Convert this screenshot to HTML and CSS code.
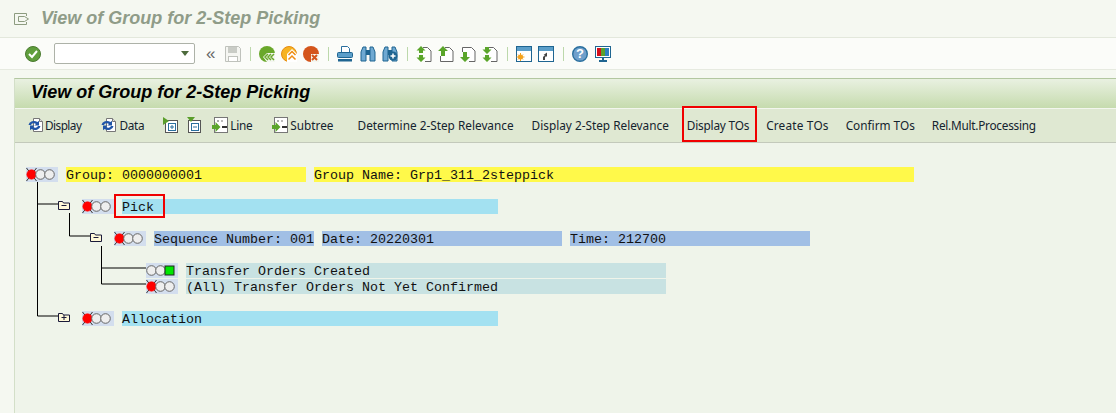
FILE: index.html
```html
<!DOCTYPE html>
<html lang="en">
<head>
    <meta charset="UTF-8">
    <title>View of Group for 2-Step Picking</title>
    <link rel="stylesheet" href="styles.css">
</head>
<body>
    <svg class="defs" width="0" height="0">
        <defs>
            <symbol id="lights-red" viewBox="0 0 32 15">
                <path d="M.5 1l10 13M10.500 1L.5 14" stroke="#333" stroke-width="1"/>
                <circle cx="5.500" cy="7.500" r="4.700" fill="#ff0000" stroke="#ff0000" stroke-width=".6"/>
                <circle cx="14.500" cy="7.500" r="4.800" fill="#eee" stroke="#666"/>
                <circle cx="23.500" cy="7.500" r="4.800" fill="#eee" stroke="#666"/>
            </symbol>
            <symbol id="lights-green" viewBox="0 0 32 15">
                <circle cx="5.500" cy="7.500" r="4.800" fill="#eee" stroke="#666"/>
                <circle cx="14.500" cy="7.500" r="4.800" fill="#eee" stroke="#666"/>
                <rect x="19" y="3" width="9" height="9" fill="#00e600" stroke="#222"/>
            </symbol>
            <symbol id="folder-open" viewBox="0 0 12 10">
                <path d="M.5 9.500v-8h4l1 1.500h6v6.500z" fill="#fff8d8" stroke="#1a1a3a"/>
                <path d="M3.500 5.500h5" stroke="#1a1a3a"/>
            </symbol>
            <symbol id="folder-closed" viewBox="0 0 12 10">
                <path d="M.5 9.500v-8h4l1 1.500h6v6.500z" fill="#fff8d8" stroke="#1a1a3a"/>
                <path d="M3.500 5.500h5M6 3v5" stroke="#1a1a3a"/>
            </symbol>
            <symbol id="refresh" viewBox="0 0 16 16">
                <path d="M5.500 1.500h6l3 3v10h-9z" fill="#fff" stroke="#777"/>
                <path d="M11.500 1.500v3h3" fill="#ddd" stroke="#777"/>
                <path d="M.5 8a5.500 4.500 0 0 1 9-3l1.500-1.200v4.700H6.500l1.500-1.500a3 2.500 0 0 0-5 1z" fill="#1f55a8"/>
                <path d="M12.500 9a5.500 4.500 0 0 1-9 3L2 13.200V8.500h4.500L5 10a3 2.500 0 0 0 5-1z" fill="#1f55a8"/>
            </symbol>
            <symbol id="expand" viewBox="0 0 16 16">
                <rect x="2.500" y="3.500" width="12" height="12" fill="#fff" stroke="#555"/>
                <path d="M0 0l6 4-6 4z" fill="#5a9e2a"/>
                <rect x="5.500" y="6.500" width="7" height="7" fill="none" stroke="#2a6f9e"/>
                <path d="M7 10h4M9 8v4" stroke="#2a6f9e"/>
            </symbol>
            <symbol id="collapse" viewBox="0 0 16 16">
                <rect x="2.500" y="3.500" width="12" height="12" fill="#fff" stroke="#555"/>
                <path d="M1 0h8l-4 5z" fill="#5a9e2a"/>
                <rect x="5.500" y="6.500" width="7" height="7" fill="none" stroke="#2a6f9e"/>
                <path d="M7 10h4" stroke="#2a6f9e"/>
            </symbol>
            <symbol id="insert" viewBox="0 0 16 16">
                <rect x="2.500" y=".5" width="13" height="15" fill="#fff" stroke="#777"/>
                <path d="M5 3h2v2H5z" fill="#aaa"/>
                <path d="M9 3h2v2H9z" fill="#bbb"/>
                <path d="M10 9h5v2h-5z" fill="#333"/>
                <path d="M0 8h3.500V5l5 5-5 5v-3H0z" fill="#5aa52a"/>
            </symbol>
            <symbol id="check" viewBox="0 0 16 16">
                <circle cx="8" cy="8" r="7.500" fill="#5f9e3c" stroke="#4a7a30"/>
                <path d="M4 8l3 3 5-6" fill="none" stroke="#fff" stroke-width="2"/>
            </symbol>
            <symbol id="save" viewBox="0 0 16 16">
                <path d="M.5.5h13l2 2v13H.5z" fill="#f5f6f2" stroke="#bfc2bc"/>
                <rect x="3" y="1" width="9" height="6" fill="#c9ccc6"/>
                <rect x="3.500" y="10.500" width="9" height="5" fill="#fff" stroke="#bfc2bc"/>
            </symbol>
            <symbol id="back" viewBox="0 0 16 16">
                <circle cx="8" cy="8" r="8" fill="#6aa82b"/>
                <path d="M16 7H8l-4 4 4 5h8z" fill="#f4f7f0"/>
                <path d="M9 8l-3 3 3 3M12 8l-3 3 3 3M15 8l-3 3 3 3" fill="none" stroke="#6aa82b" stroke-width="1.500"/>
            </symbol>
            <symbol id="exit" viewBox="0 0 16 16">
                <circle cx="8" cy="8" r="7.500" fill="#f6b321" stroke="#e58a10"/>
                <path d="M11 3l-5 5v8h10V8z" fill="#fff"/>
                <path d="M7.500 9l3.500-3.500L14.500 9M7.500 13.500l3.500-3.500 3.500 3.500" fill="none" stroke="#ef8c12" stroke-width="1.500"/>
            </symbol>
            <symbol id="cancel" viewBox="0 0 16 16">
                <circle cx="8" cy="8" r="8" fill="#d4551c"/>
                <rect x="8" y="8" width="9" height="9" fill="#f4f7f0"/>
                <path d="M9 9l5 5M14 9l-5 5" stroke="#d4551c" stroke-width="2"/>
            </symbol>
            <symbol id="print" viewBox="0 0 16 16">
                <path d="M4.500.5h6l2 2v4h-8z" fill="#fff" stroke="#2a6f9e"/>
                <rect x=".5" y="6.500" width="15" height="5" rx="1" fill="#5b9ec9" stroke="#1f6591"/>
                <rect x="1" y="13" width="14" height="2.500" fill="#1f6591"/>
            </symbol>
            <symbol id="find" viewBox="0 0 16 16">
                <path d="M1 6l2-5h3v14H1zM15 6l-2-5h-3v14h5z" fill="#6fa9d2" stroke="#1f6591"/>
                <rect x="6" y="4" width="4" height="5" fill="#1f6591"/>
            </symbol>
            <symbol id="find-next" viewBox="0 0 16 16">
                <path d="M1 6l2-5h3v14H1zM15 6l-2-5h-3v14h5z" fill="#6fa9d2" stroke="#1f6591"/>
                <rect x="6" y="4" width="4" height="5" fill="#1f6591"/>
                <circle cx="11" cy="10" r="4.500" fill="#1f6591"/>
                <path d="M8.500 10h5M11 7.500v5" stroke="#fff" stroke-width="1.500"/>
            </symbol>
            <symbol id="page-first" viewBox="0 0 16 16">
                <path d="M7 1.500h4.500L15 5v10.500H9" fill="#fff" stroke="#666"/>
                <path d="M5 0l4.500 4.500H7V7H3V4.500H.5zM5 16l4.500-4.500H7V9H3v2.500H.5z" fill="#5aa52a"/>
            </symbol>
            <symbol id="page-prev" viewBox="0 0 16 16">
                <path d="M7 1.500h4.500L15 5v10.500H2.500V10" fill="#fff" stroke="#666"/>
                <path d="M5 0l5 5H7v5H3V5H0z" fill="#5aa52a"/>
            </symbol>
            <symbol id="page-next" viewBox="0 0 16 16">
                <path d="M2.500 6V1.500h9L15 5v10.500H9" fill="#fff" stroke="#666"/>
                <path d="M5 16L0 11h3V6h4v5h3z" fill="#5aa52a"/>
            </symbol>
            <symbol id="page-last" viewBox="0 0 16 16">
                <path d="M7 1.500h4.500L15 5v10.500H9" fill="#fff" stroke="#666"/>
                <path d="M5 8L.5 3.500H3V1h4v2.500h2.500zM5 16L.5 11.500H3V9h4v2.500h2.500z" fill="#5aa52a"/>
            </symbol>
            <symbol id="window-new" viewBox="0 0 16 16">
                <rect x=".5" y=".5" width="15" height="15" fill="#fff" stroke="#1f6591"/>
                <rect x="1" y="1" width="14" height="4" fill="#5b9ec9"/>
                <circle cx="4.500" cy="11" r="2.500" fill="#f5a21c"/>
                <path d="M4.500 7v8M.5 11h8M2 8.500l5 5M7 8.500l-5 5" stroke="#f5a21c"/>
            </symbol>
            <symbol id="window-link" viewBox="0 0 16 16">
                <rect x=".5" y=".5" width="15" height="15" fill="#fff" stroke="#1f6591"/>
                <rect x="1" y="1" width="14" height="4" fill="#5b9ec9"/>
                <path d="M5 14v-3l2-2H5.500L9 6.500V11L8 10l-1 1.500V14z" fill="#444"/>
            </symbol>
            <symbol id="help" viewBox="0 0 16 16">
                <circle cx="8" cy="8" r="7.300" fill="#6f9fcb" stroke="#2a6f9e" stroke-width="1.400"/>
            </symbol>
            <symbol id="layout" viewBox="0 0 16 16">
                <rect x=".5" y=".5" width="15" height="11" fill="#fff" stroke="#1f6591"/>
                <rect x="2" y="2" width="4" height="8" fill="#d40f1c"/>
                <rect x="6" y="2" width="4" height="8" fill="#5aa02c"/>
                <rect x="10" y="2" width="4" height="8" fill="#2d7fc1"/>
                <path d="M7 12h2v2h3v2H4v-2h3z" fill="#1f6591"/>
            </symbol>
        </defs>
    </svg>

    <div class="title-bar">
        <svg class="title-icon" width="16" height="12" viewBox="0 0 16 12"><path d="M12.500 3V.5H.5v11h12V9" fill="none" stroke="#8d9c80"/><path d="M4.500 3.500h6l4 2.500-4 2.500h-6z" fill="none" stroke="#8d9c80"/></svg>
        <span class="page-title">View of Group for 2-Step Picking</span>
    </div>

    <div class="sys-toolbar">
        <svg class="icon"><use href="#check"/></svg>
        <div class="cmd-field"><span class="cmd-arrow"></span></div>
        <span class="chevrons">«</span>
        <svg class="icon"><use href="#save"/></svg>
        <span class="sep"></span>
        <div class="group">
            <svg class="icon"><use href="#back"/></svg>
            <svg class="icon"><use href="#exit"/></svg>
            <svg class="icon"><use href="#cancel"/></svg>
        </div>
        <span class="sep"></span>
        <div class="group">
            <svg class="icon"><use href="#print"/></svg>
            <svg class="icon find-icon"><use href="#find"/></svg>
            <svg class="icon"><use href="#find-next"/></svg>
        </div>
        <span class="sep"></span>
        <div class="group">
            <svg class="icon"><use href="#page-first"/></svg>
            <svg class="icon"><use href="#page-prev"/></svg>
            <svg class="icon"><use href="#page-next"/></svg>
            <svg class="icon"><use href="#page-last"/></svg>
        </div>
        <span class="sep"></span>
        <div class="group">
            <svg class="icon"><use href="#window-new"/></svg>
            <svg class="icon"><use href="#window-link"/></svg>
        </div>
        <span class="sep"></span>
        <div class="group">
            <span class="help-wrap"><svg class="icon"><use href="#help"/></svg><span class="help-mark">?</span></span>
            <svg class="icon find-icon"><use href="#layout"/></svg>
        </div>
    </div>

    <div class="panel">
        <div class="panel-title">View of Group for 2-Step Picking</div>

        <div class="app-toolbar">
            <span class="btn btn-display"><svg class="icon"><use href="#refresh"/></svg>Display</span>
            <span class="btn btn-data"><svg class="icon"><use href="#refresh"/></svg>Data</span>
            <svg class="icon icon-expand"><use href="#expand"/></svg>
            <svg class="icon icon-collapse"><use href="#collapse"/></svg>
            <span class="btn btn-line"><svg class="icon"><use href="#insert"/></svg>Line</span>
            <span class="btn btn-subtree"><svg class="icon"><use href="#insert"/></svg>Subtree</span>
            <span class="btn btn-text">Determine 2-Step Relevance</span>
            <span class="btn btn-text">Display 2-Step Relevance</span>
            <span class="btn btn-text marked">Display TOs</span>
            <span class="btn btn-text btn-create">Create TOs</span>
            <span class="btn btn-text">Confirm TOs</span>
            <span class="btn btn-text btn-rel">Rel.Mult.Processing</span>
        </div>

        <div class="tree">
            <svg class="connectors" width="200" height="200" viewBox="0 0 200 200">
                <path d="M22.500 39v134M22.500 61H43M54.500 70v23H75M86.500 103v38M86.500 125H131M86.500 141H131M22.500 173H43" fill="none" stroke="#000"/>
            </svg>

            <div class="row row-0">
                <svg class="lights"><use href="#lights-red"/></svg>
                <span class="cell yellow w30">Group: 0000000001</span>
                <span class="cell yellow w75">Group Name: Grp1_311_2steppick</span>
            </div>
            <div class="row row-1 spaced">
                <svg class="folder"><use href="#folder-open"/></svg>
                <svg class="lights"><use href="#lights-red"/></svg>
                <span class="cell cyan w47"><span class="marked-word">Pick</span></span>
            </div>
            <div class="row row-2 spaced">
                <svg class="folder"><use href="#folder-open"/></svg>
                <svg class="lights"><use href="#lights-red"/></svg>
                <span class="cell blue w20">Sequence Number: 001</span>
                <span class="cell blue w30">Date: 20220301</span>
                <span class="cell blue w30">Time: 212700</span>
            </div>
            <div class="row row-3 spaced">
                <svg class="lights"><use href="#lights-green"/></svg>
                <span class="cell teal w60">Transfer Orders Created</span>
            </div>
            <div class="row row-3">
                <svg class="lights"><use href="#lights-red"/></svg>
                <span class="cell teal w60">(All) Transfer Orders Not Yet Confirmed</span>
            </div>
            <div class="row row-1 spaced">
                <svg class="folder"><use href="#folder-closed"/></svg>
                <svg class="lights"><use href="#lights-red"/></svg>
                <span class="cell cyan w47">Allocation</span>
            </div>
        </div>
    </div>
</body>
</html>
```

FILE: styles.css
```css
html, body {
    height: 100%;
}
body {
    margin: 0;
    display: flex;
    flex-direction: column;
    overflow: hidden;
    background-color: #f5f8f1;
    font-family: "Liberation Sans", Arial, sans-serif;
}
.defs {
    position: absolute;
}
.icon {
    display: block;
    width: 16px;
    height: 16px;
    flex: none;
}

/* title */
.title-bar {
    height: 38px;
    padding-left: 14px;
    display: flex;
    align-items: center;
    border-bottom: 1px solid #e3e8dc;
    box-sizing: border-box;
}
.title-icon {
    margin-right: 11px;
}
.page-title {
    font-size: 18px;
    font-weight: bold;
    font-style: italic;
    color: #8f9c88;
}

/* system toolbar */
.sys-toolbar {
    height: 31px;
    padding-left: 25px;
    display: flex;
    align-items: center;
    border-bottom: 1px solid #e6eae0;
    background-color: #fbfcf9;
}
.cmd-field {
    width: 139px;
    height: 19px;
    margin-left: 13px;
    border: 1px solid #adb2a8;
    border-radius: 2px;
    background-color: #fff;
    position: relative;
}
.cmd-arrow {
    position: absolute;
    right: 5px;
    top: 7px;
    border-left: 4px solid transparent;
    border-right: 4px solid transparent;
    border-top: 5px solid #4d6b3c;
}
.chevrons {
    width: 30px;
    padding-left: 11px;
    box-sizing: border-box;
    font-size: 17px;
    line-height: 16px;
    color: #666;
}
.sep {
    width: 1px;
    height: 14px;
    margin: 0 8px 0 9px;
    background-color: #bcd8ab;
}
.group {
    display: flex;
    gap: 6px;
}
.find-icon {
    margin-left: 1px;
}
.help-wrap {
    position: relative;
    display: block;
}
.help-mark {
    position: absolute;
    left: 0;
    right: 0;
    top: 0;
    text-align: center;
    font-size: 13px;
    line-height: 16px;
    font-weight: bold;
    color: #fff;
}

/* panel */
.panel {
    flex: 1;
    margin: 8px 0 0 14px;
    border-top: 1px solid #b3c7a1;
    border-left: 1px solid #d3dfc8;
    display: flex;
    flex-direction: column;
    background-color: #eff4ea;
}
.panel-title {
    height: 29px;
    padding-left: 16px;
    line-height: 27px;
    font-size: 18px;
    font-weight: bold;
    font-style: italic;
    color: #000;
    background: linear-gradient(#e9f1e1, #c6dbae);
    border-bottom: 1px solid #f3f6ee;
}
.app-toolbar {
    height: 31px;
    padding: 0 0 2px 13px;
    display: flex;
    align-items: center;
    font-family: "Noto Sans", sans-serif;
    font-size: 11.8px;
    color: #14232e;
    background-color: #dfe8d2;
    border-bottom: 1px solid #c3c9bb;
}
.btn {
    display: flex;
    align-items: center;
    flex: none;
}
.btn-display {
    letter-spacing: -0.55px;
}
.btn-display .icon {
    margin-right: 1px;
}
.btn-data {
    margin-left: 20px;
    letter-spacing: -0.3px;
}
.btn-data .icon,
.btn-line .icon,
.btn-subtree .icon {
    margin-right: 2px;
}
.icon-expand {
    margin-left: 19px;
}
.icon-collapse {
    margin-left: 7px;
}
.btn-line {
    margin-left: 10px;
    letter-spacing: -0.3px;
}
.btn-subtree {
    margin-left: 20px;
}
.btn-text {
    margin-left: 18px;
}
.btn-subtree + .btn-text {
    margin-left: 24px;
}
.marked ~ .btn-text {
    margin-left: 17px;
}
.btn-text.marked {
    letter-spacing: -0.2px;
}
.btn-create {
    letter-spacing: 0.2px;
}
.btn-rel {
    letter-spacing: -0.25px;
}
.marked,
.marked-word {
    position: relative;
}
.marked::after {
    content: "";
    position: absolute;
    left: -5px;
    right: -8px;
    top: -11px;
    bottom: -9px;
    border: 2px solid #f00000;
}
.marked-word {
    display: inline-block;
    height: 15px;
}
.marked-word::after {
    content: "";
    position: absolute;
    left: -8px;
    right: -11px;
    top: -5px;
    bottom: -4px;
    border: 2px solid #f00000;
}

/* tree list, 8px character grid */
.tree {
    flex: 1;
    position: relative;
    padding-top: 24px;
    font-family: "Liberation Mono", "Courier New", monospace;
    font-size: 13.33px;
    color: #111;
}
.connectors {
    position: absolute;
    left: 0;
    top: 0;
}
.row {
    display: flex;
    height: 16px;
}
.row.spaced {
    margin-top: 16px;
}
.row-0 { padding-left: 11px; }
.row-1 { padding-left: 43px; }
.row-2 { padding-left: 75px; }
.row-3 { padding-left: 131px; }
.folder {
    width: 12px;
    height: 10px;
    margin: 1px 12px 0 0;
    flex: none;
}
.lights {
    width: 32px;
    height: 15px;
    flex: none;
    margin-right: 8px;
    background-color: #d3deee;
}
.cell {
    height: 15px;
    line-height: 17px;
    flex: none;
    margin-right: 8px;
    white-space: pre;
}
.w20 { width: 160px; }
.w30 { width: 240px; }
.w47 { width: 376px; }
.w60 { width: 480px; }
.w75 { width: 600px; }
.yellow { background-color: #fff94a; }
.cyan { background-color: #a3e1f1; }
.blue { background-color: #a1bfe5; }
.teal { background-color: #c8e2e2; }
```
